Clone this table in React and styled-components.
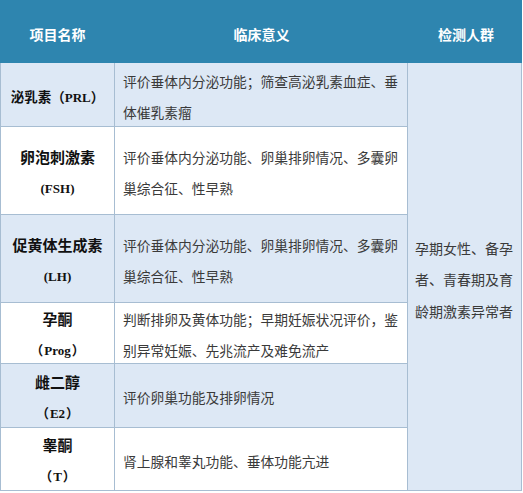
import React from "react";
import styled, { createGlobalStyle } from "styled-components";

const Global = createGlobalStyle`
  html, body { margin: 0; padding: 0; background: #ffffff; }
  body { font-family: "Noto Sans CJK SC", "Noto Sans", sans-serif; }
`;

const BORDER = "#a7bdd2";
const LIGHT = "#dde8f5";
const HEAD = "#2e85af";

const Table = styled.div`
  display: grid;
  grid-template-columns: 115px 293px 114px;
  grid-template-rows: 63px 64px 88px 88px 61px 64px 63px;
  width: 522px;
`;

const HeadCell = styled.div`
  background: ${HEAD};
  color: #ffffff;
  font-weight: 700;
  font-size: 14px;
  display: flex;
  align-items: center;
  justify-content: center;
  padding-top: 4px;
  box-sizing: border-box;
  padding-left: ${(p) => p.$pl || 0}px;
`;

const Cell = styled.div`
  box-sizing: border-box;
  background: ${(p) => (p.$light ? LIGHT : "#ffffff")};
  border-right: 1px solid ${BORDER};
  border-bottom: 1px solid ${BORDER};
  border-left: ${(p) => (p.$first ? `1px solid ${BORDER}` : "none")};
  display: flex;
  align-items: center;
  padding-top: 4px;
`;

const NameCell = styled(Cell)`
  justify-content: center;
  text-align: center;
  font-weight: 700;
  color: #111111;
  font-size: 15px;
  line-height: 30px;
  white-space: nowrap;
`;

const DescCell = styled(Cell)`
  padding-left: 8px;
  color: #3a3a3a;
  font-size: 13.75px;
  line-height: 31px;
  white-space: nowrap;
`;

const GroupCell = styled(Cell)`
  grid-column: 3;
  grid-row: 2 / 8;
  padding-left: 7px;
  padding-top: 7px;
  color: #3a3a3a;
  font-size: 14px;
  line-height: 31.5px;
  white-space: nowrap;
`;

const Abbr = styled.span`
  font-family: "Liberation Serif", "Noto Sans CJK SC", serif;
  font-weight: 700;
  font-size: 13px;
  color: #111111;
`;

const Paren = styled.span`
  font-size: ${(p) => (p.$narrow ? 13 : 13.5)}px;
  font-feature-settings: ${(p) => (p.$narrow ? '"halt"' : "normal")};
  margin: 0 ${(p) => (p.$narrow ? 1 : 0)}px;
`;

const SmallName = styled.span`
  font-size: 13.5px;
`;

const Abbrev = ({ children, narrow }) => (
  <>
    <Paren $narrow={narrow}>（</Paren>
    <Abbr>{children}</Abbr>
    <Paren $narrow={narrow}>）</Paren>
  </>
);

export default function App() {
  return (
    <>
      <Global />
      <Table>
        <HeadCell>项目名称</HeadCell>
        <HeadCell>临床意义</HeadCell>
        <HeadCell $pl={2}>检测人群</HeadCell>

        <NameCell $first $light>
          <div>
            <SmallName>泌乳素</SmallName>
            <Abbrev>PRL</Abbrev>
          </div>
        </NameCell>
        <DescCell $light>
          <div>
            评价垂体内分泌功能；筛查高泌乳素血症、垂
            <br />
            体催乳素瘤
          </div>
        </DescCell>
        <GroupCell $light>
          <div>
            孕期女性、备孕
            <br />
            者、青春期及育
            <br />
            龄期激素异常者
          </div>
        </GroupCell>

        <NameCell $first>
          <div>
            卵泡刺激素
            <br />
            <Abbr>(FSH)</Abbr>
          </div>
        </NameCell>
        <DescCell>
          <div>
            评价垂体内分泌功能、卵巢排卵情况、多囊卵
            <br />
            巢综合征、性早熟
          </div>
        </DescCell>

        <NameCell $first $light>
          <div>
            促黄体生成素
            <br />
            <Abbr>(LH)</Abbr>
          </div>
        </NameCell>
        <DescCell $light>
          <div>
            评价垂体内分泌功能、卵巢排卵情况、多囊卵
            <br />
            巢综合征、性早熟
          </div>
        </DescCell>

        <NameCell $first>
          <div>
            孕酮
            <br />
            <Abbrev narrow>Prog</Abbrev>
          </div>
        </NameCell>
        <DescCell>
          <div>
            判断排卵及黄体功能；早期妊娠状况评价，鉴
            <br />
            别异常妊娠、先兆流产及难免流产
          </div>
        </DescCell>

        <NameCell $first $light>
          <div>
            雌二醇
            <br />
            <Abbrev narrow>E2</Abbrev>
          </div>
        </NameCell>
        <DescCell $light>
          <div>评价卵巢功能及排卵情况</div>
        </DescCell>

        <NameCell $first>
          <div>
            睾酮
            <br />
            <Abbrev narrow>T</Abbrev>
          </div>
        </NameCell>
        <DescCell>
          <div>肾上腺和睾丸功能、垂体功能亢进</div>
        </DescCell>
      </Table>
    </>
  );
}
